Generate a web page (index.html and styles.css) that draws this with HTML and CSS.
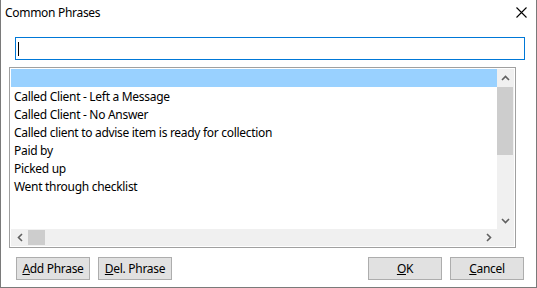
FILE: index.html
```html
<!DOCTYPE html>
<html lang="en">
<head>
    <meta charset="UTF-8">
    <title>Common Phrases</title>
    <link rel="stylesheet" href="styles.css">
</head>
<body>
    <div class="dialog">
        <div class="titlebar">
            <span class="title">Common Phrases</span>
            <svg class="close" width="11" height="11" viewBox="0 0 11 11">
                <path d="M0.5 0.5 L10.5 10.5 M10.5 0.5 L0.5 10.5" stroke="#000" stroke-width="1.1" fill="none"/>
            </svg>
        </div>

        <div class="search"><span class="caret"></span></div>

        <div class="list">
            <div class="items">
                <div class="item selected">&nbsp;</div>
                <div class="item">Called Client - Left a Message</div>
                <div class="item">Called Client - No Answer</div>
                <div class="item">Called client to advise item is ready for collection</div>
                <div class="item">Paid by</div>
                <div class="item">Picked up</div>
                <div class="item">Went through checklist</div>
            </div>
            <div class="vscroll">
                <div class="arrow">
                    <svg width="9" height="6" viewBox="0 0 9 6"><path d="M1 5 L4.5 1.5 L8 5" stroke="#606060" stroke-width="1.6" fill="none"/></svg>
                </div>
                <div class="vthumb"></div>
                <div class="vtrack"></div>
                <div class="arrow">
                    <svg width="9" height="6" viewBox="0 0 9 6"><path d="M1 1 L4.5 4.5 L8 1" stroke="#606060" stroke-width="1.6" fill="none"/></svg>
                </div>
            </div>
            <div class="hscroll">
                <div class="arrow">
                    <svg width="6" height="9" viewBox="0 0 6 9"><path d="M5 1 L1.5 4.5 L5 8" stroke="#606060" stroke-width="1.6" fill="none"/></svg>
                </div>
                <div class="hthumb"></div>
                <div class="htrack"></div>
                <div class="arrow">
                    <svg width="6" height="9" viewBox="0 0 6 9"><path d="M1 1 L4.5 4.5 L1 8" stroke="#606060" stroke-width="1.6" fill="none"/></svg>
                </div>
            </div>
            <div class="corner"></div>
        </div>

        <div class="buttons">
            <button class="btn"><u>A</u>dd Phrase</button>
            <button class="btn"><u>D</u>el. Phrase</button>
            <span class="spacer"></span>
            <button class="btn"><u>O</u>K</button>
            <button class="btn"><u>C</u>ancel</button>
        </div>
    </div>
</body>
</html>
```

FILE: styles.css
```css
body {
    margin: 0;
    background: #fff;
}
.dialog {
    width: 537px;
    height: 288px;
    box-sizing: border-box;
    background: #fff;
    border-left: 1px solid #7a7a7a;
    border-right: 1px solid #7a7a7a;
    border-bottom: 1px solid #7a7a7a;
    font-family: "Noto Sans", "Liberation Sans", sans-serif;
    font-size: 12px;
    letter-spacing: -0.3px;
    color: #000;
    display: flex;
    flex-direction: column;
}
.titlebar {
    height: 25px;
    display: flex;
    align-items: center;
    padding-left: 4px;
}
.title {
    flex: 1;
}
.close {
    margin-right: 9px;
}
.search {
    height: 23px;
    width: 510px;
    box-sizing: border-box;
    margin: 12px 0 0 14px;
    border: 1px solid #0078d7;
    display: flex;
    align-items: center;
    padding-left: 2px;
}
.caret {
    width: 1px;
    height: 14px;
    background: #000;
}
.list {
    width: 507px;
    height: 181px;
    box-sizing: border-box;
    margin: 7px 0 0 8px;
    border: 1px solid #a0a0a0;
    padding: 1px;
    display: grid;
    grid-template-columns: 486px 17px;
    grid-template-rows: 160px 17px;
}
.items {
    overflow: hidden;
}
.item {
    height: 18px;
    box-sizing: border-box;
    padding: 2px 0 0 3px;
    line-height: 16px;
    white-space: nowrap;
}
.selected {
    background: #99d1ff;
}
.vscroll {
    background: #f0f0f0;
    display: flex;
    flex-direction: column;
}
.hscroll {
    background: #f0f0f0;
    display: flex;
}
.corner {
    background: #f0f0f0;
}
.arrow {
    width: 17px;
    height: 17px;
    display: flex;
    align-items: center;
    justify-content: center;
    flex: none;
}
.vthumb {
    height: 68px;
    margin: 1px 1px 0 0;
    background: #cdcdcd;
    flex: none;
}
.vtrack {
    flex: 1;
}
.hthumb {
    width: 17px;
    margin: 1px 0 1px 0;
    background: #cdcdcd;
    flex: none;
}
.htrack {
    flex: 1;
}
.buttons {
    display: flex;
    gap: 8px;
    margin-top: 9px;
    padding: 0 12px 0 15px;
}
.spacer {
    flex: 1;
}
.btn {
    width: 74px;
    height: 23px;
    box-sizing: border-box;
    background: #e1e1e1;
    border: 1px solid #adadad;
    border-radius: 0;
    font-family: "Noto Sans", "Liberation Sans", sans-serif;
    font-size: 12px;
    letter-spacing: -0.3px;
    color: #000;
    padding: 0;
}
```
